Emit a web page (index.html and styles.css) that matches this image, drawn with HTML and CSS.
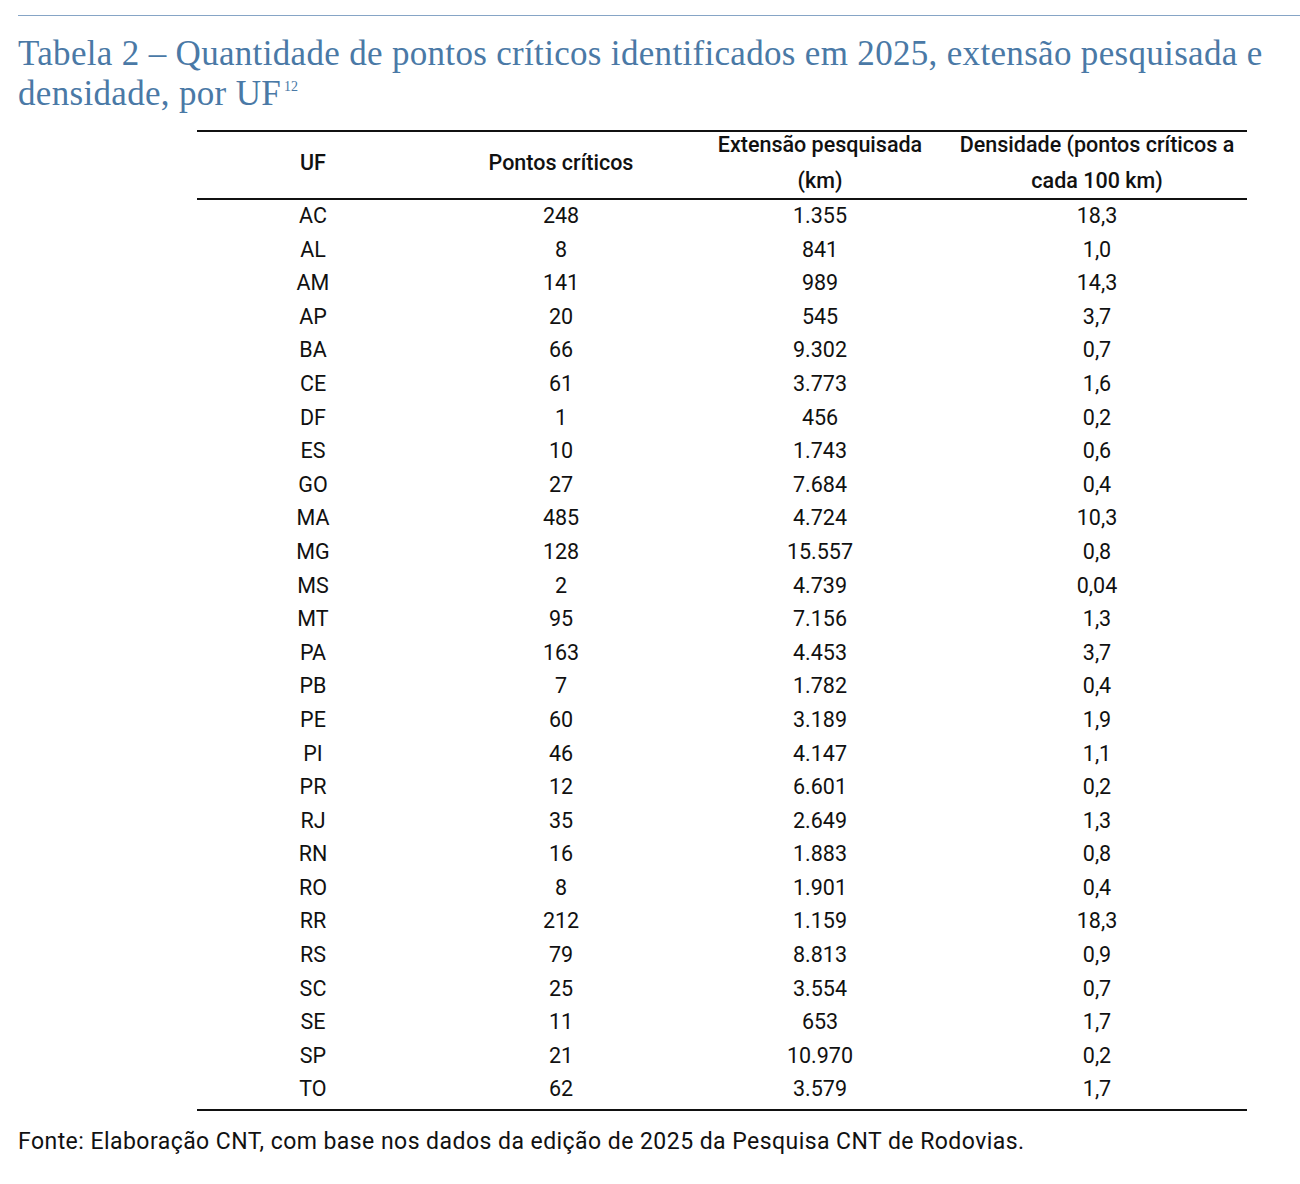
FILE: index.html
```html
<!DOCTYPE html>
<html lang="pt-BR">
<head>
<meta charset="utf-8">
<title>Tabela 2</title>
<link rel="stylesheet" href="styles.css">
</head>
<body>
<div class="page">
  <hr class="top-rule">
  <h1 class="title">Tabela 2 – Quantidade de pontos críticos identificados em 2025, extensão pesquisada e densidade, por UF<sup class="note">12</sup></h1>
  <table class="data">
    <colgroup>
      <col class="c1"><col class="c2"><col class="c3"><col class="c4">
    </colgroup>
    <thead>
      <tr>
        <th class="single"><span class="l">UF</span></th>
        <th class="single"><span class="l">Pontos críticos</span></th>
        <th><span class="l">Extensão pesquisada</span><span class="l l2">(km)</span></th>
        <th><span class="l">Densidade (pontos críticos a</span><span class="l l2">cada 100 km)</span></th>
      </tr>
    </thead>
    <tbody>
      <tr><td>AC</td><td>248</td><td>1.355</td><td>18,3</td></tr>
      <tr><td>AL</td><td>8</td><td>841</td><td>1,0</td></tr>
      <tr><td>AM</td><td>141</td><td>989</td><td>14,3</td></tr>
      <tr><td>AP</td><td>20</td><td>545</td><td>3,7</td></tr>
      <tr><td>BA</td><td>66</td><td>9.302</td><td>0,7</td></tr>
      <tr><td>CE</td><td>61</td><td>3.773</td><td>1,6</td></tr>
      <tr><td>DF</td><td>1</td><td>456</td><td>0,2</td></tr>
      <tr><td>ES</td><td>10</td><td>1.743</td><td>0,6</td></tr>
      <tr><td>GO</td><td>27</td><td>7.684</td><td>0,4</td></tr>
      <tr><td>MA</td><td>485</td><td>4.724</td><td>10,3</td></tr>
      <tr><td>MG</td><td>128</td><td>15.557</td><td>0,8</td></tr>
      <tr><td>MS</td><td>2</td><td>4.739</td><td>0,04</td></tr>
      <tr><td>MT</td><td>95</td><td>7.156</td><td>1,3</td></tr>
      <tr><td>PA</td><td>163</td><td>4.453</td><td>3,7</td></tr>
      <tr><td>PB</td><td>7</td><td>1.782</td><td>0,4</td></tr>
      <tr><td>PE</td><td>60</td><td>3.189</td><td>1,9</td></tr>
      <tr><td>PI</td><td>46</td><td>4.147</td><td>1,1</td></tr>
      <tr><td>PR</td><td>12</td><td>6.601</td><td>0,2</td></tr>
      <tr><td>RJ</td><td>35</td><td>2.649</td><td>1,3</td></tr>
      <tr><td>RN</td><td>16</td><td>1.883</td><td>0,8</td></tr>
      <tr><td>RO</td><td>8</td><td>1.901</td><td>0,4</td></tr>
      <tr><td>RR</td><td>212</td><td>1.159</td><td>18,3</td></tr>
      <tr><td>RS</td><td>79</td><td>8.813</td><td>0,9</td></tr>
      <tr><td>SC</td><td>25</td><td>3.554</td><td>0,7</td></tr>
      <tr><td>SE</td><td>11</td><td>653</td><td>1,7</td></tr>
      <tr><td>SP</td><td>21</td><td>10.970</td><td>0,2</td></tr>
      <tr><td>TO</td><td>62</td><td>3.579</td><td>1,7</td></tr>
    </tbody>
  </table>
  <p class="source">Fonte: Elaboração CNT, com base nos dados da edição de 2025 da Pesquisa CNT de Rodovias.</p>
</div>
</body>
</html>
```

FILE: styles.css
```css
html, body {
  margin: 0;
  padding: 0;
  background: #ffffff;
}

body {
  font-family: Roboto, "Liberation Sans", sans-serif;
  color: #111111;
}

.page {
  padding: 15px 0 0 18px;
}

.top-rule {
  margin: 0;
  border: 0;
  border-top: 1px solid #86a5c6;
  height: 0;
}

.title {
  margin: 18px 0 0 0;
  font-family: "Liberation Serif", "Times New Roman", serif;
  font-weight: 400;
  font-size: 35px;
  line-height: 40px;
  color: #4a79a6;
  letter-spacing: 0.32px;
}

.note {
  font-size: 14px;
  letter-spacing: 0;
  margin-left: 3px;
  vertical-align: 14px;
  line-height: 1;
}

.data {
  margin: 16px 0 0 179px;
  width: 1050px;
  border-collapse: collapse;
  table-layout: fixed;
  font-size: 21.5px;
}

.c1 { width: 232px; }
.c2 { width: 264px; }
.c3 { width: 254px; }
.c4 { width: 300px; }

.data thead tr {
  border-top: 2px solid #111111;
  border-bottom: 2px solid #111111;
}

.data th {
  font-weight: 500;
  padding: 0 0 4.6px 0;
  text-align: center;
  vertical-align: top;
}

.data th .l {
  display: block;
  line-height: 25.4px;
}

.data th .l2 {
  margin-top: 10.6px;
}

.data th.single {
  padding-top: 18px;
}

.data tbody tr:last-child {
  border-bottom: 2px solid #111111;
}

.data td {
  padding: 2px 0 3px 0;
  text-align: center;
  line-height: 28.6px;
}

.data tbody tr:last-child td {
  padding-bottom: 5px;
}

.source {
  margin: 17px 0 0 0;
  font-size: 23px;
  line-height: 28px;
  letter-spacing: 0.45px;
}
```
